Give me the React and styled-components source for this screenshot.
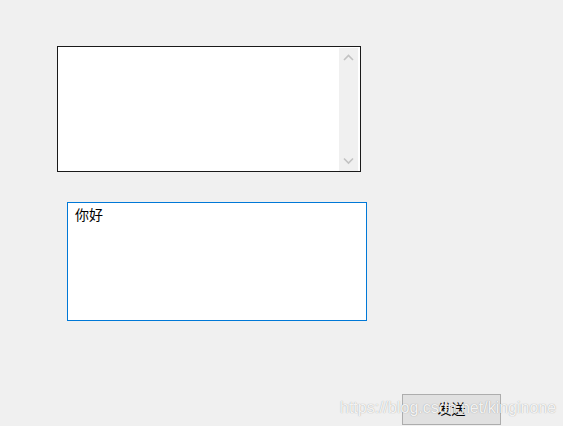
import React, { useState } from "react";
import styled, { createGlobalStyle } from "styled-components";

const GlobalStyle = createGlobalStyle`
  html, body {
    margin: 0;
    padding: 0;
    height: 100%;
    overflow: hidden;
    background: #f0f0f0;
  }
`;

const App = () => {
  const [message, setMessage] = useState("你好");

  return (
    <Page>
      <GlobalStyle />
      <LogBox>
        <ScrollBar>
          <Arrow viewBox="0 0 19 20">
            <polyline points="5,12 9.5,7.5 14,12" />
          </Arrow>
          <Arrow viewBox="0 0 19 20">
            <polyline points="5,7.5 9.5,12 14,7.5" />
          </Arrow>
        </ScrollBar>
      </LogBox>
      <InputBox
        value={message}
        onChange={(e) => setMessage(e.target.value)}
      />
      <SendButton>发送</SendButton>
      <Watermark>https://blog.csdn.net/kinginone</Watermark>
    </Page>
  );
};

const Page = styled.div`
  position: relative;
  width: 563px;
  height: 426px;
  box-sizing: border-box;
  padding: 46px 0 0 57px;
  display: flex;
  flex-direction: column;
  align-items: flex-start;
  background: #f0f0f0;
  font-family: "Noto Sans CJK SC", "Liberation Sans", sans-serif;
`;

const LogBox = styled.div`
  width: 304px;
  height: 126px;
  box-sizing: border-box;
  border: 1px solid #1a1a1a;
  background: #ffffff;
  display: flex;
  justify-content: flex-end;
  padding: 1px 2px 0 0;
`;

const ScrollBar = styled.div`
  width: 19px;
  background: #f0f0f0;
  display: flex;
  flex-direction: column;
  justify-content: space-between;
`;

const Arrow = styled.svg`
  width: 19px;
  height: 20px;
  display: block;

  polyline {
    fill: none;
    stroke: #c2c2c2;
    stroke-width: 1.6;
  }
`;

const InputBox = styled.textarea`
  margin: 30px 0 0 10px;
  width: 300px;
  height: 119px;
  box-sizing: border-box;
  border: 1px solid #0078d7;
  background: #ffffff;
  padding: 2px 7px;
  font-family: "Noto Sans CJK SC", sans-serif;
  font-size: 14px;
  line-height: 18px;
  color: #000000;
  resize: none;
  outline: none;
  overflow: hidden;
`;

const SendButton = styled.button`
  margin: 73px 0 0 345px;
  width: 99px;
  height: 31px;
  box-sizing: border-box;
  border: 1px solid #adadad;
  background: #e1e1e1;
  color: #000000;
  font-family: "Noto Sans CJK SC", sans-serif;
  font-size: 14px;
  padding: 0 0 3px;
  display: flex;
  align-items: center;
  justify-content: center;
`;

const Watermark = styled.div`
  position: absolute;
  left: 340px;
  top: 398px;
  font-family: "Liberation Sans", Arial, sans-serif;
  font-size: 16px;
  line-height: 20px;
  color: rgba(255, 255, 255, 0.9);
  text-shadow: 0 0 1px rgba(90, 90, 90, 0.6);
  pointer-events: none;
  white-space: nowrap;
`;

export default App;
